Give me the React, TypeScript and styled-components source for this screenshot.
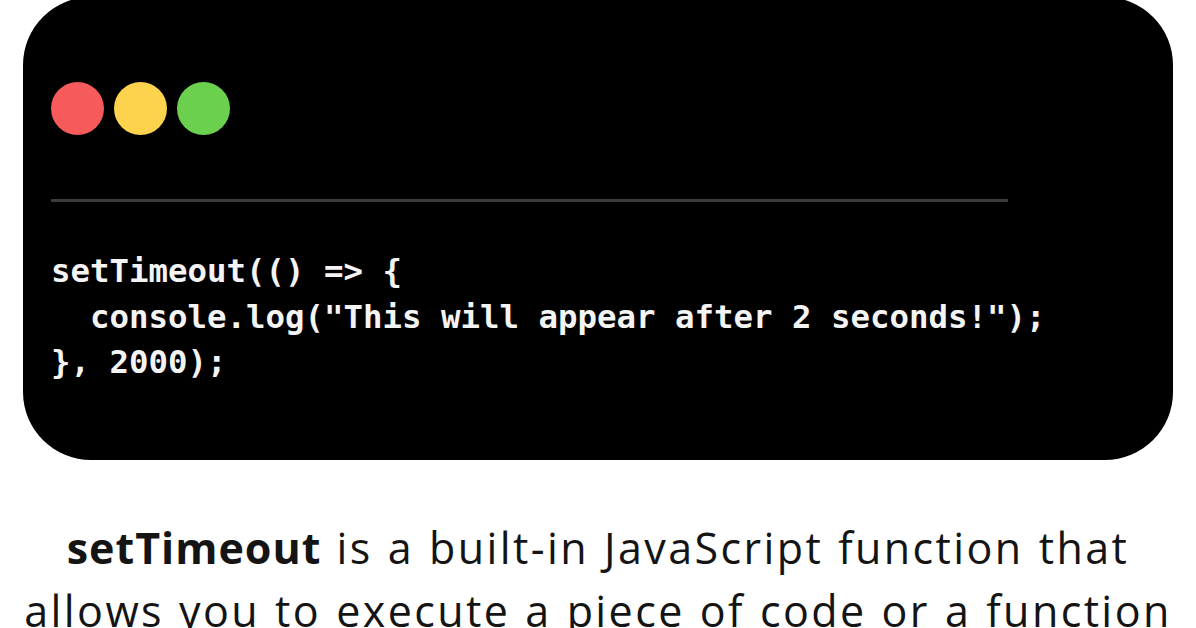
import React from "react";
import styled, { createGlobalStyle } from "styled-components";

const GlobalStyle = createGlobalStyle`
  html, body {
    margin: 0;
    padding: 0;
    background: #ffffff;
  }
  body {
    font-family: "Open Sans", "Liberation Sans", sans-serif;
  }
`;

const Page = styled.div`
  width: 1196px;
  height: 628px;
  overflow: hidden;
  display: flex;
  flex-direction: column;
  align-items: center;
  background: #ffffff;
`;

const Card = styled.section`
  box-sizing: border-box;
  margin-top: -3px;
  width: 1150px;
  height: 463px;
  flex-shrink: 0;
  background: #000000;
  border-radius: 68px;
  padding: 85px 0 0 28px;
  display: flex;
  flex-direction: column;
  align-items: flex-start;
`;

const Dots = styled.div`
  display: flex;
  gap: 10px;
`;

const Dot = styled.span<{ $color: string }>`
  display: block;
  width: 53px;
  height: 53px;
  border-radius: 50%;
  background: ${(p) => p.$color};
`;

const Divider = styled.hr`
  margin: 64px 0 0 0;
  border: none;
  width: 957px;
  height: 3px;
  background: #3b3b3b;
`;

const Code = styled.pre`
  margin: 47px 0 0 0;
  font-family: "DejaVu Sans Mono", "Liberation Mono", monospace;
  font-weight: bold;
  font-size: 32.4px;
  line-height: 45.5px;
  color: #f4f4f4;
  white-space: pre;
`;

const Caption = styled.p`
  margin: 56px 0 0 0;
  text-align: center;
  white-space: nowrap;
  font-family: "Open Sans", "Liberation Sans", sans-serif;
  font-size: 43px;
  letter-spacing: 2.4px;
  word-spacing: 1.5px;
  line-height: 63px;
  color: #141414;
`;

const Strong = styled.strong`
  font-weight: 700;
  letter-spacing: 1px;
`;

export default function App() {
  return (
    <>
      <GlobalStyle />
      <Page>
        <Card>
          <Dots>
            <Dot $color="#f65a5b" />
            <Dot $color="#fdd24c" />
            <Dot $color="#6bd04e" />
          </Dots>
          <Divider />
          <Code>{`setTimeout(() => {
  console.log("This will appear after 2 seconds!");
}, 2000);`}</Code>
        </Card>
        <Caption>
          <Strong>setTimeout</Strong> is a built-in JavaScript function that
          <br />
          allows you to execute a piece of code or a function
        </Caption>
      </Page>
    </>
  );
}
